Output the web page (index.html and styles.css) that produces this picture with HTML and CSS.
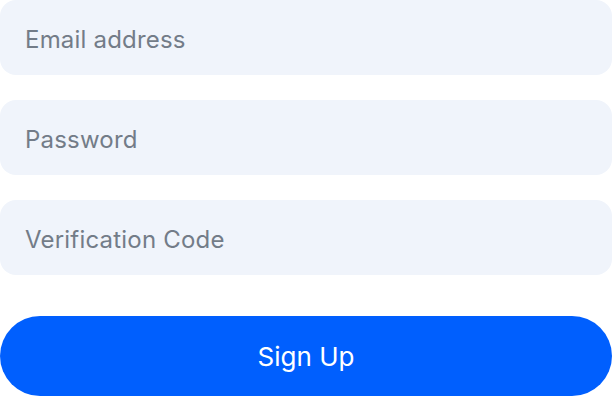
FILE: index.html
```html
<!DOCTYPE html>
<html lang="en">
<head>
    <meta charset="UTF-8">
    <meta name="viewport" content="width=device-width, initial-scale=1.0">
    <title>Sign Up</title>
    <link rel="stylesheet" href="styles.css">
</head>
<body>
    <form class="signup-form" onsubmit="return false;">
        <input type="email" class="field" placeholder="Email address">
        <input type="password" class="field" placeholder="Password">
        <input type="text" class="field" placeholder="Verification Code">
        <button type="submit" class="submit-btn">Sign Up</button>
    </form>
</body>
</html>
```

FILE: styles.css
```css
body {
    margin: 0;
    background: #ffffff;
    font-family: Inter, "Noto Sans", Arial, sans-serif;
}
.signup-form {
    display: flex;
    flex-direction: column;
    gap: 25px;
    width: 612px;
}
.field {
    box-sizing: border-box;
    height: 75px;
    width: 100%;
    padding: 4px 25px 0;
    border: none;
    border-radius: 16px;
    background-color: #f0f4fb; /* pale blue-grey */
    font-family: inherit;
    font-size: 24px;
    letter-spacing: 0.2px;
    color: #333;
    outline: none;
}
.field::placeholder {
    color: #737c88;
}
.submit-btn {
    margin-top: 16px;
    height: 80px;
    width: 100%;
    border: none;
    border-radius: 40px;
    background-color: #005ffe; /* bright blue */
    color: #ffffff;
    font-family: inherit;
    font-size: 26px;
    cursor: pointer;
}
```
